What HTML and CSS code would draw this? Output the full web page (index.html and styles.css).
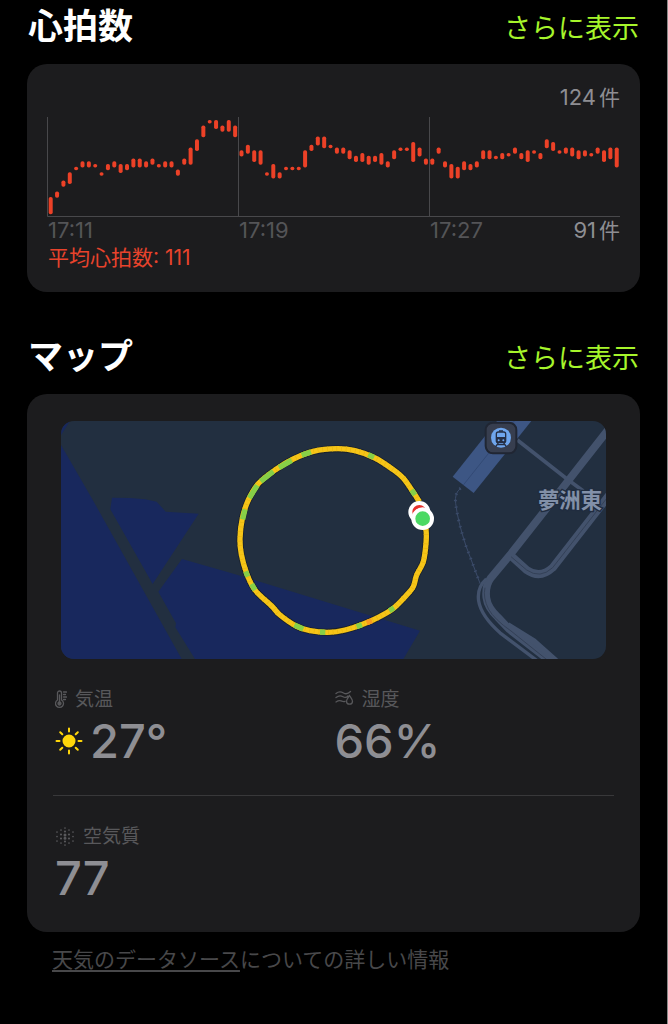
FILE: index.html
```html
<!DOCTYPE html>
<html lang="ja">
<head>
  <meta charset="UTF-8" />
  <meta name="viewport" content="width=device-width, initial-scale=1" />
  <title>ワークアウト</title>
  <link rel="stylesheet" href="styles.css">
</head>
<body>

  <section>
    <div class="section-header first">
      <h2>心拍数</h2>
      <a href="#heart">さらに表示</a>
    </div>
    <div class="card heart-card" id="heart">
      <div class="scale-top">124<span class="unit">件</span></div>
      <svg class="chart" viewBox="0 0 573 100" role="img" aria-label="心拍数グラフ">
        <path d="M.5 0V99.5H573M191.5 0V99M382.5 0V99" class="chart-grid" />
        <g id="bars"></g>
      </svg>
      <div class="axis">
        <span>17:11</span>
        <span>17:19</span>
        <span>17:27</span>
        <span class="scale-bottom">91<span class="unit">件</span></span>
      </div>
      <div class="average">平均心拍数: 111</div>
    </div>
  </section>

  <section>
    <div class="section-header">
      <h2>マップ</h2>
      <a href="#map">さらに表示</a>
    </div>
    <div class="card map-card" id="map">
      <svg class="map" viewBox="0 0 1635 714" role="img" aria-label="ルートマップ">
        <rect width="1635" height="714" fill="#222f40" />

        <!-- water -->
        <g fill="#18285d">
          <path d="M0 0H27L0 42Z" />
          <path d="M0 72L97 240L362 714H0Z" />
          <path d="M153 230L207 231L252 235L287 242L314 272L413 278L275 489L148 265Z" />
          <path d="M363 414L292 512L345 607L343 619L402 714H1027L1077 629L507 455Z" />
        </g>

        <!-- station building and railway -->
        <path d="M1175 167L1238 216L1411 0H1308Z" fill="#3d5684" />
        <path d="M1207 192L1360 0" stroke="#334a75" stroke-width="3" />
        <path d="M1199 202Q1180 215 1184 247Q1190 300 1215 375L1257 487" class="rail" />
        <path d="M1199 202Q1180 215 1184 247Q1190 300 1215 375L1257 487" class="rail ties" />

        <!-- roads -->
        <g class="roads">
          <path d="M1369 57L1522 177L1567 210" stroke-width="11" />
          <path d="M1347 402L1397 447Q1437 475 1475 440L1645 222" stroke-width="24" />
          <path d="M1645 22L1347 402L1290 470Q1272 494 1276 530Q1280 560 1310 588L1345 625L1475 726" stroke-width="23" />
          <path d="M1276 474Q1247 500 1253 540Q1260 585 1320 638L1435 724" stroke-width="10" />
          <path d="M1340 612L1420 662L1485 720" stroke-width="18" />
        </g>
        <g class="road-lines">
          <path d="M1350 407L1397 447Q1437 475 1475 440L1645 222" />
          <path d="M1272 500Q1265 530 1283 565Q1300 595 1350 630L1465 722" />
        </g>

        <!-- route -->
        <path id="route-edge" class="route edge" />
        <path id="route" class="route" />
        <path id="route-dots" class="route dots" />
        <path class="route slow" d="M1052 207L1062 222M922 101L939 109M722 103L750 93M654 140L692 118M599 181L637 151M565 231L589 193M545 295L552 265M554 451L560 467M572 489L582 507M700 612L727 624M777 633L793 634M887 617L903 611M985 569L999 560" />
        <path class="route slower" d="M917 605L933 599" />
        <g stroke="#fff" stroke-width="12">
          <circle cx="1075" cy="273" r="27" fill="#e7312d" />
          <circle cx="1085" cy="293" r="28" fill="#4bd964" />
        </g>

        <!-- station marker -->
        <rect x="1274" y="5" width="92" height="92" rx="22" fill="#373e4f" stroke="#202633" stroke-width="6" />
        <circle cx="1320" cy="50" r="30" fill="#6fa6ed" />
        <g fill="none" stroke="#252f45" stroke-width="4">
          <rect x="1306" y="33" width="28" height="32" rx="6" />
          <path d="M1306 50H1334M1314 30H1326M1312 66L1304 77M1328 66L1336 77M1309 71H1331" />
        </g>
        <path d="M1306 51H1334V60Q1334 65 1329 65H1311Q1306 65 1306 60Z" fill="#252f45" />
        <circle cx="1313" cy="58" r="3" fill="#6fa6ed" />
        <circle cx="1327" cy="58" r="3" fill="#6fa6ed" />

        <text x="1431" y="262" class="place">夢洲東</text>
      </svg>

      <div class="metrics">
        <div class="metric">
          <div class="metric-label">
            <svg width="12" height="20" viewBox="0 0 12 20" class="line-icon">
              <path d="M2.5 10V3a2 2 0 0 1 4 0V10a4 4 0 1 1-4 0zM4.5 5v8M8.5 2h3M8.500 4.500h2M8.500 7h3M8.500 9.500h2" />
              <circle cx="4.500" cy="13.500" r="1.500" fill="currentColor" />
            </svg>
            気温
          </div>
          <div class="metric-value">
            <svg width="28" height="28" viewBox="0 0 28 28" class="sun">
              <circle cx="14" cy="14" r="5.500" fill="currentColor" />
              <path d="M14 1.500v3M14 23.500v3M1.500 14h3M23.500 14h3M5.200 5.200l2.100 2.100M20.700 20.700l2.100 2.100M5.200 22.800l2.100-2.100M20.700 7.300l2.100-2.100" />
            </svg>
            27°
          </div>
        </div>
        <div class="metric">
          <div class="metric-label">
            <svg width="19" height="20" viewBox="0 0 19 20" class="line-icon">
              <path d="M1 3.500c3-2.500 5-2 7.500-.5s4.500 1 7-1.500M1 7.500c3-2.500 5-2 7-.8s3.500 1 5-.7M1 12c3-2 4.500-1.500 6-.8 1 .4 2 .6 3 .1M14.500 5.500c1.500 2.200 3 4 3 5.700a3 3 0 0 1-6 0c0-1.700 1.500-3.500 3-5.700z" />
            </svg>
            湿度
          </div>
          <div class="metric-value">66%</div>
        </div>
      </div>

      <div class="metrics">
        <div class="metric">
          <div class="metric-label">
            <svg width="20" height="20" viewBox="0 0 20 20" class="dots-icon">
              <path d="M10 1v.01M10 18v.01M6 3v.01M14 3v.01M6 16v.01M14 16v.01M2 5v.01M18 5v.01M2 9.500v.01M18 9.500v.01M2 14v.01M18 14v.01" stroke-width="1.700" />
              <path d="M10 4.500v.01M10 14.500v.01M6 7.500v.01M14 7.500v.01M6 11.500v.01M14 11.500v.01" stroke-width="2.200" />
              <path d="M10 8v.01M10 11.300v.01" stroke-width="3" />
            </svg>
            空気質
          </div>
          <div class="metric-value">77</div>
        </div>
      </div>
    </div>
    <p class="source"><a href="#source">天気のデータソース</a>についての詳しい情報</p>
  </section>

  <script>
    const svgNS = 'http://www.w3.org/2000/svg';

    // [max, min] heart rate of each bar
    const rates = [
      [96,91],[98,97],[102,101],[105,102],[107,107],[109,108],[109,108],[108,108],[105,105],[108,107],
      [109,108],[108,106],[108,107],[110,108],[110,108],[109,108],[110,109],[108,108],[109,108],[109,108],
      [106,105],[110,109],[114,109],[117,114],[122,119],[124,124],[124,122],[122,121],[124,121],[122,119],
      [113,112],[115,113],[113,110],[113,109],[105,105],[108,104],[105,104],[107,107],[107,107],[107,107],
      [113,108],[115,114],[118,116],[118,115],[115,115],[114,113],[114,113],[113,111],[111,110],[112,110],
      [111,109],[111,110],[112,109],[109,108],[113,111],[114,114],[114,114],[116,110],[114,112],[110,109],
      [110,109],[114,113],[109,108],[108,104],[107,104],[109,107],[108,107],[109,108],[113,111],[113,111],
      [111,111],[112,111],[112,112],[114,113],[112,111],[113,110],[113,113],[112,111],[117,115],[116,114],
      [113,113],[114,113],[114,112],[113,111],[113,112],[112,112],[114,113],[113,110],[114,111],[114,108]
    ];
    const bars = document.getElementById('bars');
    rates.forEach(([max, min], i) => {
      const bar = document.createElementNS(svgNS, 'rect');
      bar.setAttribute('x', 1.7 + i * 6.36);
      bar.setAttribute('y', 3 + (124 - max) * 2.75);
      bar.setAttribute('width', 4);
      bar.setAttribute('height', 3.5 + (max - min) * 2.75);
      bar.setAttribute('rx', 1.8);
      bars.appendChild(bar);
    });

    const points = [
      [1075,242],[1057,214],[1027,172],[995,145],[942,111],[882,89],[827,83],[757,91],[697,114],[642,147],
      [593,187],[562,237],[544,292],[537,352],[541,400],[557,457],[582,507],[632,555],[657,582],[707,616],
      [747,629],[802,634],[852,627],[907,609],[952,589],[997,562],[1037,522],[1057,497],[1067,462],[1087,422],
      [1095,367],[1095,327],[1085,293]
    ];
    // smooth curve through all the points
    let d = 'M' + points[0];
    for (let i = 0; i < points.length - 1; i++) {
      const p0 = points[i - 1] || points[i];
      const p1 = points[i];
      const p2 = points[i + 1];
      const p3 = points[i + 2] || p2;
      d += ` C${p1[0] + (p2[0] - p0[0]) / 6} ${p1[1] + (p2[1] - p0[1]) / 6}`;
      d += ` ${p2[0] - (p3[0] - p1[0]) / 6} ${p2[1] - (p3[1] - p1[1]) / 6} ${p2}`;
    }
    ['route-edge', 'route', 'route-dots'].forEach(id => {
      document.getElementById(id).setAttribute('d', d);
    });
  </script>
</body>
</html>
```
FILE: styles.css
```css
* { box-sizing: border-box; }
body {
  margin: 0;
  min-height: 100vh;
  padding: 0 27px;
  background: #000;
  border-right: 1px solid #8a8a8a;
  font-family: Inter, "Noto Sans CJK JP", sans-serif;
  color: #fff;
}
.section-header {
  display: flex;
  justify-content: space-between;
  align-items: center;
  padding: 38px 1px 12px;
}
.section-header.first {
  padding-top: 0;
}
h2 {
  margin: 0;
  font-size: 35px;
  line-height: 52px;
  font-weight: 700;
}
.section-header a {
  padding-top: 6px;
  color: #a6f52b;
  font-size: 27px;
  line-height: 40px;
  text-decoration: none;
}
.card {
  background: #1c1c1e;
  border-radius: 20px;
}

/* heart rate */
.heart-card {
  padding: 20px 20px 21px;
  font-size: 21px;
  line-height: 27px;
}
.scale-top, .axis {
  font-size: 22px;
}
.scale-top {
  text-align: right;
  color: #8e8e93;
}
.unit {
  margin-left: 3px;
  font-size: 21px;
}
.chart {
  display: block;
  width: 100%;
  margin-top: 6px;
}
.chart-grid {
  fill: none;
  stroke: #48484b;
}
#bars {
  fill: #ec4127;
}
.axis {
  display: grid;
  grid-template-columns: repeat(3, 1fr);
  color: #545457;
  position: relative;
}
.axis > span {
  padding-left: 1px;
}
.axis .scale-bottom {
  position: absolute;
  right: 0;
  color: #8e8e93;
}
.average {
  padding-left: 1px;
  color: #e8432c;
}

/* map */
.map-card {
  padding: 27px 26px 0;
}
.map {
  display: block;
  width: calc(100% - 16px);
  margin: 0 8px;
  border-radius: 13px;
}
.rail {
  fill: none;
  stroke: #3b4b69;
  stroke-width: 3;
}
.ties {
  stroke-width: 9;
  stroke-dasharray: 4 16;
}
.roads {
  fill: none;
  stroke: #43526c;
  stroke-linejoin: round;
}
.road-lines {
  fill: none;
  stroke: #344157;
  stroke-width: 3;
}
.route {
  fill: none;
  stroke: #f6c518;
  stroke-width: 16;
  stroke-linejoin: round;
}
.route.edge {
  stroke: #18202b;
  stroke-width: 21;
}
.route.dots {
  stroke: #e9b50f;
  stroke-dasharray: 2 12;
}
.route.slow {
  stroke: #87cf47;
}
.route.slower {
  stroke: #f79a20;
}
.place {
  font-family: "Noto Sans CJK JP", sans-serif;
  font-size: 64px;
  font-weight: 700;
  fill: #8290a8;
  stroke: #202c3f;
  stroke-width: 8px;
  paint-order: stroke;
}
.metrics {
  display: grid;
  grid-template-columns: 1fr 1fr;
  padding: 28px 0 26px 2px;
}
.metrics + .metrics {
  border-top: 1px solid #38383a;
}
.metric-label {
  display: flex;
  align-items: center;
  gap: 8px;
  height: 26px;
  color: #58585b;
  font-size: 19px;
  line-height: 26px;
}
.metric-value {
  display: flex;
  align-items: center;
  gap: 7px;
  height: 56px;
  color: #8e8e93;
  font-size: 47px;
  line-height: 56px;
  font-weight: 500;
}
.line-icon {
  fill: none;
  stroke: currentColor;
  stroke-width: 1.3;
  stroke-linecap: round;
}
.dots-icon {
  stroke: currentColor;
  stroke-linecap: round;
}
.sun {
  color: #ffd60a;
  fill: none;
  stroke: currentColor;
  stroke-width: 2;
  stroke-linecap: round;
}
.source {
  margin: 0;
  padding: 13px 25px;
  color: #48484a;
  font-size: 21px;
  line-height: 30px;
}
.source a {
  color: inherit;
  text-underline-offset: 3px;
}
```
